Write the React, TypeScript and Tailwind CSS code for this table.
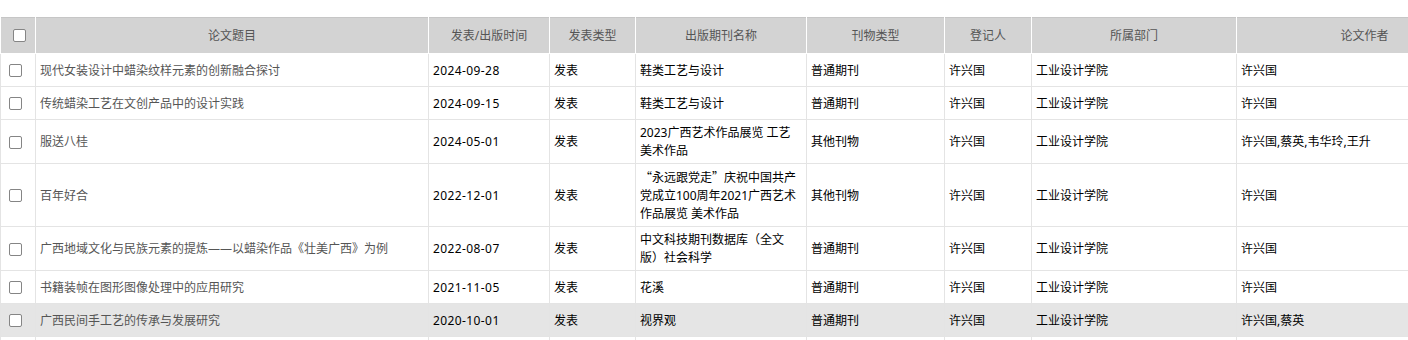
import React from "react";

type Row = {
  title: string;
  date: string;
  kind: string;
  journal: React.ReactNode;
  jtype: string;
  reg: string;
  dept: string;
  authors: string;
  hl?: boolean;
  blank?: boolean;
};

const Q = ({ c }: { c: string }) => <span className="font-['Noto_Sans_CJK_SC']">{c}</span>;

const rows: Row[] = [
  { title: "现代女装设计中蜡染纹样元素的创新融合探讨", date: "2024-09-28", kind: "发表", journal: "鞋类工艺与设计", jtype: "普通期刊", reg: "许兴国", dept: "工业设计学院", authors: "许兴国" },
  { title: "传统蜡染工艺在文创产品中的设计实践", date: "2024-09-15", kind: "发表", journal: "鞋类工艺与设计", jtype: "普通期刊", reg: "许兴国", dept: "工业设计学院", authors: "许兴国" },
  { title: "服送八桂", date: "2024-05-01", kind: "发表", journal: "2023广西艺术作品展览 工艺美术作品", jtype: "其他刊物", reg: "许兴国", dept: "工业设计学院", authors: "许兴国,蔡英,韦华玲,王升" },
  {
    title: "百年好合",
    date: "2022-12-01",
    kind: "发表",
    journal: (
      <>
        <Q c="“" />永远跟党走<Q c="”" />庆祝中国共产党成立100周年2021广西艺术作品展览 美术作品
      </>
    ),
    jtype: "其他刊物",
    reg: "许兴国",
    dept: "工业设计学院",
    authors: "许兴国",
  },
  { title: "广西地域文化与民族元素的提炼——以蜡染作品《壮美广西》为例", date: "2022-08-07", kind: "发表", journal: "中文科技期刊数据库（全文版）社会科学", jtype: "普通期刊", reg: "许兴国", dept: "工业设计学院", authors: "许兴国" },
  { title: "书籍装帧在图形图像处理中的应用研究", date: "2021-11-05", kind: "发表", journal: "花溪", jtype: "普通期刊", reg: "许兴国", dept: "工业设计学院", authors: "许兴国" },
  { title: "广西民间手工艺的传承与发展研究", date: "2020-10-01", kind: "发表", journal: "视界观", jtype: "普通期刊", reg: "许兴国", dept: "工业设计学院", authors: "许兴国,蔡英", hl: true },
  { title: "", date: "", kind: "", journal: "", jtype: "", reg: "", dept: "", authors: "", blank: true },
];

const headers = ["论文题目", "发表/出版时间", "发表类型", "出版期刊名称", "刊物类型", "登记人", "所属部门", "论文作者"];

function Box() {
  return <span className="block w-[13px] h-[13px] rounded-[2px] border border-[#858585] bg-white" />;
}

const td = "border border-[#e4e4e4] pl-[4px] pr-[4px] pt-[4px] pb-[3px] align-middle h-[33px]";

export default function App() {
  return (
    <div className="w-[1408px] h-[340px] overflow-hidden bg-white font-['Noto_Sans','Noto_Sans_CJK_SC',sans-serif] text-[12px] leading-[18px]">
      <div className="pt-[17px]">
        <table className="table-fixed border-collapse w-[1492px]">
          <colgroup>
            <col className="w-[35px]" />
            <col className="w-[393px]" />
            <col className="w-[121px]" />
            <col className="w-[86px]" />
            <col className="w-[171px]" />
            <col className="w-[138px]" />
            <col className="w-[87px]" />
            <col className="w-[205px]" />
            <col className="w-[256px]" />
          </colgroup>
          <thead>
            <tr className="bg-[#d3d3d3] border-t border-t-[#c6c6c6]">
              <th className="h-[36px] border-x border-x-white border-b border-b-white p-0 align-middle">
                <div className="flex justify-center pl-[3px]">
                  <Box />
                </div>
              </th>
              {headers.map((h) => (
                <th key={h} className="h-[36px] border-x border-x-white border-b border-b-white font-normal text-[#555] text-center align-middle p-0">
                  {h}
                </th>
              ))}
            </tr>
          </thead>
          <tbody>
            {rows.map((r, i) => (
              <tr key={i} className={r.hl ? "bg-[#e5e5e5]" : "bg-white"}>
                <td className={td}>
                  {!r.blank && (
                    <div className="pl-[4px]">
                      <Box />
                    </div>
                  )}
                </td>
                <td className={td + " text-[#555]"}>{r.title}</td>
                <td className={td + " text-black tracking-[0.4px]"}>{r.date}</td>
                <td className={td + " text-black"}>{r.kind}</td>
                <td className={td + " text-black"}>{r.journal}</td>
                <td className={td + " text-black"}>{r.jtype}</td>
                <td className={td + " text-black"}>{r.reg}</td>
                <td className={td + " text-black"}>{r.dept}</td>
                <td className={td + " text-black"}>{r.authors}</td>
              </tr>
            ))}
          </tbody>
        </table>
      </div>
    </div>
  );
}
